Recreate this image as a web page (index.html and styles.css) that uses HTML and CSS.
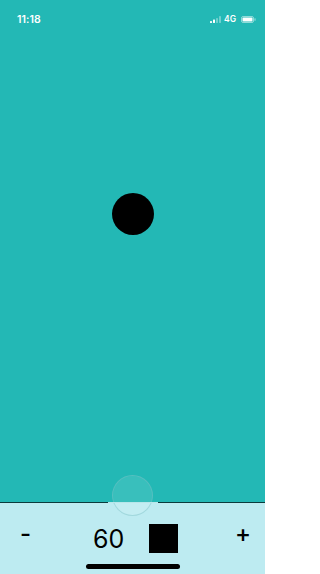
FILE: index.html
```html
<!DOCTYPE html>
<html>
<head>
<meta charset="utf-8">
<link rel="stylesheet" href="styles.css">
</head>
<body>
<div class="screen">
  <div class="stage">
    <div class="status">
      <span class="time">11:18</span>
      <span class="status-icons">
        <svg class="signal" width="11" height="7" viewBox="0 0 11 7">
          <rect x="0" y="5" width="2" height="2" rx="0.4" fill="#fff"/>
          <rect x="3" y="3.5" width="2" height="3.5" rx="0.4" fill="#fff"/>
          <rect x="6" y="2" width="2" height="5" rx="0.4" fill="rgba(255,255,255,0.35)"/>
          <rect x="9" y="0" width="2" height="7" rx="0.4" fill="rgba(255,255,255,0.35)"/>
        </svg>
        <span class="net">4G</span>
        <svg class="battery" width="15" height="7" viewBox="0 0 15 7">
          <rect x="0.5" y="0.5" width="12" height="6" rx="1.6" fill="none" stroke="rgba(255,255,255,0.5)" stroke-width="1"/>
          <rect x="1.5" y="1.5" width="10" height="4" rx="0.9" fill="#fff"/>
          <rect x="13.4" y="2.3" width="1.2" height="2.4" rx="0.5" fill="rgba(255,255,255,0.5)"/>
        </svg>
      </span>
    </div>
    <div class="ball"></div>
  </div>
  <div class="panel">
    <div class="controls">
      <span class="minus">-</span>
      <span class="value">60</span>
      <span class="swatch"></span>
      <span class="plus">+</span>
    </div>
    <div class="home"></div>
  </div>
  <div class="handle"></div>
</div>
</body>
</html>
```

FILE: styles.css
```css
html, body {
  margin: 0;
  padding: 0;
}
body {
  width: 265px;
  height: 574px;
  overflow: hidden;
  font-family: Inter, "Liberation Sans", sans-serif;
}
.screen {
  position: relative;
  width: 265px;
  height: 574px;
  display: flex;
  flex-direction: column;
}
.stage {
  height: 502px;
  background: #23b8b5;
  display: flex;
  flex-direction: column;
}
.status {
  height: 38px;
  display: flex;
  align-items: center;
  justify-content: space-between;
  padding: 0 9px 0 17px;
  color: #fff;
}
.time {
  font-size: 10.5px;
  font-weight: 600;
  letter-spacing: 0.1px;
}
.status-icons {
  display: flex;
  align-items: center;
  gap: 3px;
}
.net {
  font-size: 8.5px;
  font-weight: 600;
  margin-right: 2px;
}
.ball {
  width: 42px;
  height: 42px;
  border-radius: 50%;
  background: #000;
  margin: 155px auto 0;
}
.panel {
  flex: 1;
  background: #bdebf1;
  border-top: 1px solid #0b3a3c;
  display: flex;
  flex-direction: column;
}
.controls {
  height: 29px;
  margin-top: 21px;
  display: flex;
  align-items: center;
  padding: 0 14px 0 20px;
  color: #000;
}
.minus {
  font-size: 24px;
  line-height: 29px;
  font-weight: 500;
  margin-top: -11px;
}
.value {
  font-size: 25px;
  line-height: 29px;
  margin-left: 62px;
  margin-top: 2px;
}
.swatch {
  width: 29px;
  height: 29px;
  background: #000;
  margin-left: 25px;
}
.plus {
  margin-left: auto;
  font-size: 24px;
  line-height: 29px;
  font-weight: 500;
  margin-top: -10px;
}
.home {
  width: 94px;
  height: 5px;
  border-radius: 3px;
  background: #000;
  margin: 11px auto 0;
}
.handle {
  position: absolute;
  left: 112px;
  top: 475px;
  width: 41px;
  height: 41px;
  box-sizing: border-box;
  border-radius: 50%;
  border: 1px solid rgba(120, 190, 195, 0.45);
  background: rgba(255, 255, 255, 0.1);
}
.handle::before {
  content: "";
  position: absolute;
  left: -5px;
  top: 26px;
  width: 50px;
  height: 1px;
  background: #b8e6ea;
}
```
